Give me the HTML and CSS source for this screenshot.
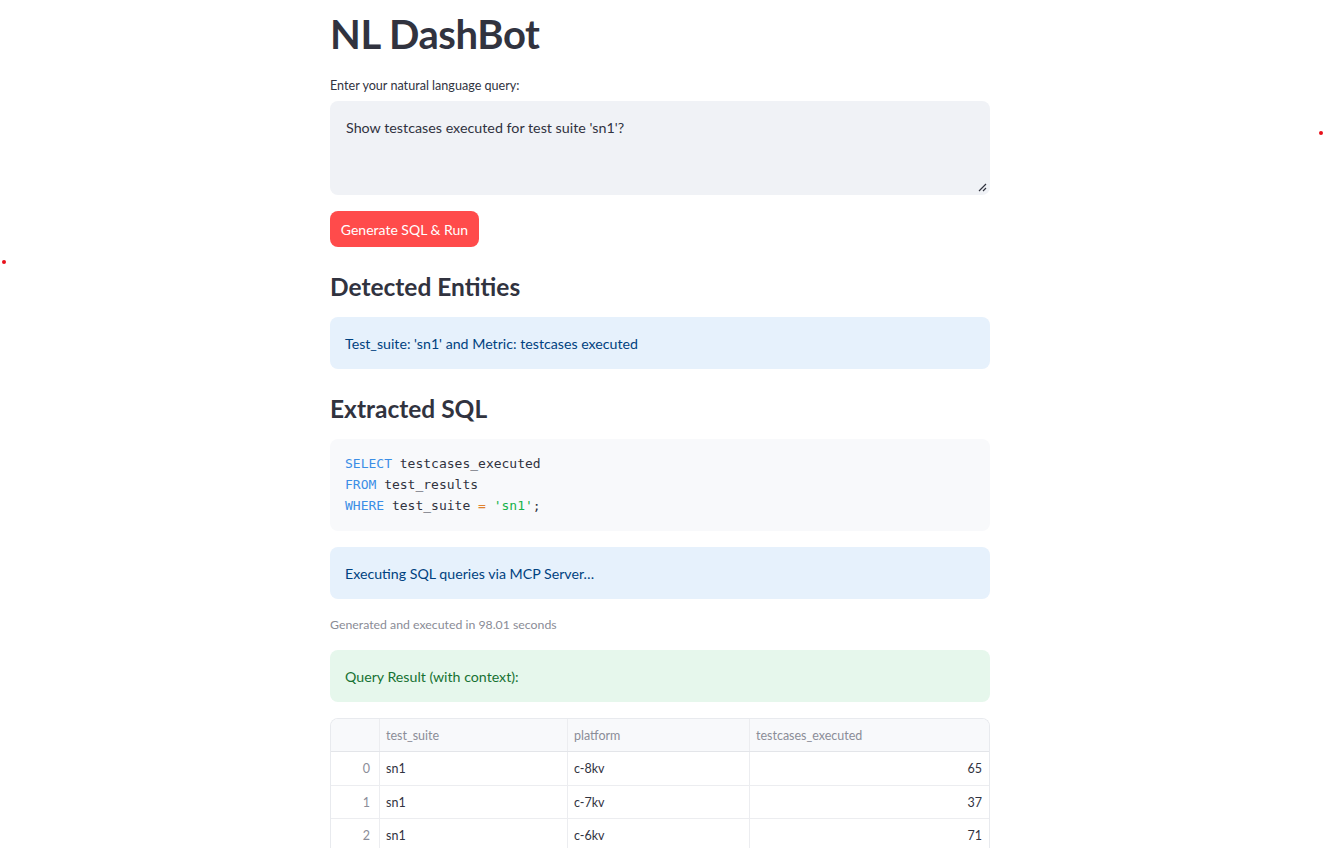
FILE: index.html
```html
<!DOCTYPE html>
<html>
<head>
<meta charset="utf-8">
<link rel="stylesheet" href="styles.css">
</head>
<body>
<span class="dot dot-right"></span>
<span class="dot dot-left"></span>
<main class="main">
  <h1 class="title">NL DashBot</h1>
  <label class="label">Enter your natural language query:</label>
  <div class="textarea">Show testcases executed for test suite 'sn1'?<svg class="grip" width="10" height="10" viewBox="0 0 10 10"><path d="M9 2 L2 9 M9 6 L6 9" stroke="#31333f" stroke-width="1.2" fill="none"/></svg></div>
  <div class="btn-row"><button class="btn">Generate SQL &amp; Run</button></div>
  <h2 class="h2 h2-first">Detected Entities</h2>
  <div class="alert alert-info">Test_suite: 'sn1' and Metric: testcases executed</div>
  <h2 class="h2">Extracted SQL</h2>
  <pre class="code"><span class="kw">SELECT</span> testcases_executed
<span class="kw">FROM</span> test_results
<span class="kw">WHERE</span> test_suite <span class="op">=</span> <span class="str">'sn1'</span>;</pre>
  <div class="alert alert-info alert-exec">Executing SQL queries via MCP Server…</div>
  <p class="caption">Generated and executed in 98.01 seconds</p>
  <div class="alert alert-success">Query Result (with context):</div>
  <div class="table">
    <div class="row head">
      <div class="cell idx"></div>
      <div class="cell c1">test_suite</div>
      <div class="cell c2">platform</div>
      <div class="cell c3">testcases_executed</div>
    </div>
    <div class="row">
      <div class="cell idx">0</div>
      <div class="cell c1">sn1</div>
      <div class="cell c2">c-8kv</div>
      <div class="cell c3 num">65</div>
    </div>
    <div class="row">
      <div class="cell idx">1</div>
      <div class="cell c1">sn1</div>
      <div class="cell c2">c-7kv</div>
      <div class="cell c3 num">37</div>
    </div>
    <div class="row">
      <div class="cell idx">2</div>
      <div class="cell c1">sn1</div>
      <div class="cell c2">c-6kv</div>
      <div class="cell c3 num">71</div>
    </div>
  </div>
</main>
</body>
</html>
```
FILE: styles.css
```css
html, body {
  margin: 0;
  padding: 0;
  background: #ffffff;
  height: 848px;
  overflow: hidden;
}
body {
  font-family: "Lato", "Noto Sans", sans-serif;
  color: #31333f;
  position: relative;
}
.dot {
  position: absolute;
  width: 4px;
  height: 4px;
  border-radius: 50%;
  background: #e8101a;
}
.dot-right { left: 1319px; top: 131px; }
.dot-left { left: 2px; top: 260px; }
.main {
  width: 660px;
  margin: 0 auto;
  padding: 10px 4px 0 0;
  display: flex;
  flex-direction: column;
}
.title {
  margin: 0;
  font-size: 40px;
  line-height: 49px;
  font-weight: 700;
  letter-spacing: -0.4px;
  color: #31333f;
}
.label {
  margin-top: 18px;
  font-size: 12.6px;
  line-height: 18px;
}
.textarea {
  margin-top: 6px;
  height: 94px;
  box-sizing: border-box;
  background: #f0f2f6;
  border-radius: 8px;
  padding: 17px 16px;
  font-size: 14.3px;
  line-height: 20px;
  position: relative;
}
.grip {
  position: absolute;
  right: 3px;
  bottom: 3px;
}
.btn-row {
  margin-top: 16px;
  display: flex;
}
.btn {
  height: 36px;
  width: 149px;
  border: none;
  border-radius: 8px;
  background: #ff4b4b;
  color: #ffffff;
  font-family: inherit;
  font-size: 14px;
  padding: 0;
}
.h2 {
  margin: 25px 0 0;
  font-size: 24.5px;
  line-height: 30px;
  font-weight: 700;
  letter-spacing: 0;
}
.alert {
  margin-top: 15px;
  height: 52px;
  box-sizing: border-box;
  border-radius: 8px;
  padding: 0 15px;
  display: flex;
  align-items: center;
  font-size: 14.2px;
}
.alert-info {
  background: #e6f1fc;
  color: #004280;
}
.alert-exec { margin-top: 16px; }
.alert-success {
  background: #e6f7ec;
  color: #177233;
  margin-top: 16px;
}
.code {
  margin: 15px 0 0;
  height: 92px;
  box-sizing: border-box;
  background: #f8f9fb;
  border-radius: 8px;
  padding: 14px 15px;
  font-family: "DejaVu Sans Mono", monospace;
  font-size: 13px;
  line-height: 21px;
  color: #31333f;
}
.kw { color: #3b8ee6; }
.op { color: #e0822e; }
.str { color: #17b24a; }
.caption {
  margin: 17px 0 0;
  font-size: 12.3px;
  line-height: 18px;
  color: #8a8c96;
}
.table {
  margin-top: 16px;
  border: 1px solid #e8eaee;
  border-bottom: none;
  border-radius: 8px 8px 0 0;
  overflow: hidden;
  font-size: 12.5px;
}
.row {
  display: flex;
  height: 33px;
  box-sizing: border-box;
  border-top: 1px solid #ecedf0;
}
.row.head {
  border-top: none;
  height: 33px;
  background: #f8f9fb;
  color: #8b8d98;
  border-bottom: 1px solid #e3e5e9;
}
.row.head + .row { border-top: none; }
.cell {
  display: flex;
  align-items: center;
  padding: 0 7px 0 6px;
  box-sizing: border-box;
  border-left: 1px solid #ecedf0;
}
.cell.idx {
  width: 48px;
  border-left: none;
  justify-content: flex-end;
  color: #8b8d98;
  padding-right: 9px;
}
.c1 { width: 188px; }
.c2 { width: 182px; }
.c3 { flex: 1; }
.num { justify-content: flex-end; }
```
